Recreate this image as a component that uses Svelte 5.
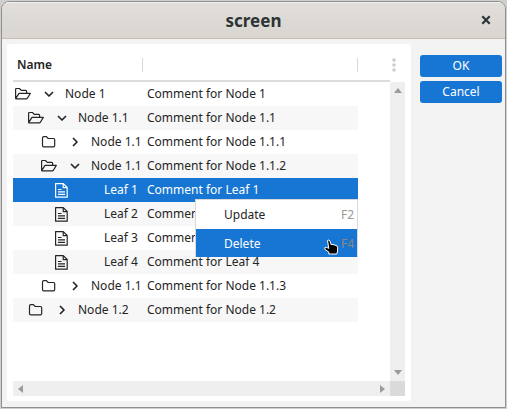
<script>
  let selected = $state(4);
  let active = $state("Delete");

  const rows = [
    { depth: 0, kind: "open", name: "Node 1", comment: "Comment for Node 1" },
    { depth: 1, kind: "open", name: "Node 1.1", comment: "Comment for Node 1.1" },
    { depth: 2, kind: "closed", name: "Node 1.1", comment: "Comment for Node 1.1.1" },
    { depth: 2, kind: "open", name: "Node 1.1", comment: "Comment for Node 1.1.2" },
    { depth: 3, kind: "leaf", name: "Leaf 1", comment: "Comment for Leaf 1" },
    { depth: 3, kind: "leaf", name: "Leaf 2", comment: "Comment for Leaf 2" },
    { depth: 3, kind: "leaf", name: "Leaf 3", comment: "Comment for Leaf 3" },
    { depth: 3, kind: "leaf", name: "Leaf 4", comment: "Comment for Leaf 4" },
    { depth: 2, kind: "closed", name: "Node 1.1", comment: "Comment for Node 1.1.3" },
    { depth: 1, kind: "closed", name: "Node 1.2", comment: "Comment for Node 1.2" }
  ];

  const menu = [
    { label: "Update", key: "F2" },
    { label: "Delete", key: "F4" }
  ];
</script>

<div class="dialog" role="dialog" aria-labelledby="title">
  <header>
    <h1 id="title">screen</h1>
    <button class="close" aria-label="Close">
      <svg width="10" height="10" viewBox="0 0 10 10"><path d="M1.3 1.3 8.7 8.7M8.7 1.3 1.3 8.7" /></svg>
    </button>
  </header>

  <div class="content">
    <div class="panel">
      <div class="tree">
        <table>
          <thead>
            <tr>
              <th class="name"><div class="head">Name</div></th>
              <th class="comment"><div class="head"></div></th>
              <th></th>
            </tr>
          </thead>
          <tbody>
            {#each rows as row, i}
              <tr class:selected={selected === i} onclick={() => (selected = i)}>
                <td>
                  <div class="node" style="padding-left: {2 + row.depth * 13}px">
                    <svg class="icon" width="16" height="16" viewBox="0 0 16 16">
                      {#if row.kind === "open"}
                        <path d="M.6 12.6V3.4Q.6 2.5 1.5 2.5H4.4L6.3 4.4H10.7Q11.6 4.4 11.6 5.3V7.3M.6 12.6 4 7.4H15.3L12.4 12.2Q12 12.8 11.3 12.8H1.2Q.6 12.8 .6 12.2" />
                      {:else if row.kind === "closed"}
                        <path d="M1.5 4Q1.5 2.6 2.9 2.6H5.4L7.2 4.5H12.4Q13.7 4.5 13.7 5.8V11.5Q13.7 12.8 12.4 12.8H2.8Q1.5 12.8 1.5 11.5Z" />
                      {:else}
                        <path d="M1.6 1.6H9.3L13.2 5.5V15.2H1.6ZM9.2 1.8V5.7H13M4 7.5H7.5M4 9.9H11M4 12.3H11" />
                      {/if}
                    </svg>
                    <svg class="arrow" width="10" height="10" viewBox="0 0 10 10">
                      {#if row.kind === "open"}
                        <path d="M1 3 5 7 9 3" />
                      {:else if row.kind === "closed"}
                        <path d="M3 1 7 5 3 9" />
                      {/if}
                    </svg>
                    <span>{row.name}</span>
                  </div>
                </td>
                <td>{row.comment}</td>
                <td></td>
              </tr>
            {/each}
          </tbody>
        </table>
      </div>

      <div class="side">
        <button class="more" aria-label="Columns">
          <svg width="4" height="14" viewBox="0 0 4 14">
            <circle cx="2" cy="2" r="1.7" /><circle cx="2" cy="7" r="1.7" /><circle cx="2" cy="12" r="1.7" />
          </svg>
        </button>
        <div class="scroll vertical">
          <svg width="8" height="5" viewBox="0 0 8 5"><path d="M0 5 4 0 8 5Z" /></svg>
          <svg width="8" height="5" viewBox="0 0 8 5"><path d="M0 0H8L4 5Z" /></svg>
        </div>
      </div>

      <div class="scroll horizontal">
        <svg width="5" height="8" viewBox="0 0 5 8"><path d="M5 0V8L0 4Z" /></svg>
        <svg width="5" height="8" viewBox="0 0 5 8"><path d="M0 0 5 4 0 8Z" /></svg>
      </div>
      <div class="corner"></div>

      <div class="menu" role="menu">
        {#each menu as item}
          <button role="menuitem" class:active={active === item.label} onmouseenter={() => (active = item.label)}>
            <span>{item.label}</span>
            <span class="key">{item.key}</span>
          </button>
        {/each}
        <svg class="pointer" width="15" height="16" viewBox="0 0 15 16">
          <path d="M3.5 1.5Q5 .3 6 2L7 5.5 9 5.4 11 6.2 13 6.8 13.6 8.2V12L12.8 15H4.8V13L1 10.5.8 8.6 2.6 8.3 4.8 9.4Z" />
        </svg>
      </div>
    </div>

    <div class="actions">
      <button>OK</button>
      <button>Cancel</button>
    </div>
  </div>
</div>

<style>
  :global(body) {
    background: #cdd0ce;
  }

  .dialog {
    box-sizing: border-box;
    display: flex;
    flex-direction: column;
    height: calc(100vh - 2px);
    margin: 1px 1px;
    border: 1px solid #8e8f8e;
    border-radius: 8px 8px 0 0;
    background: #f3f3f3;
    color: #252525;
    font-family: "Noto Sans", sans-serif;
    font-size: 12px;
    overflow: hidden;
  }

  button {
    font: inherit;
    border: 0;
    padding: 0;
    background: none;
    color: inherit;
  }

  svg {
    display: block;
  }

  header {
    box-sizing: border-box;
    flex: none;
    display: grid;
    grid-template-columns: 28px 1fr 28px;
    align-items: center;
    height: 37px;
    border-top: 1px solid #f4f2f0;
    border-bottom: 1px solid #c9bdb2;
    background: linear-gradient(#e1dedb, #d9d5d0);
  }

  h1 {
    grid-column: 2;
    margin: 0;
    text-align: center;
    font-size: 17px;
    line-height: 24px;
    color: #2e3436;
  }

  .close path {
    fill: none;
    stroke: #2e3436;
    stroke-width: 2.2;
  }

  .close {
    padding: 0 0 2px 4px;
    justify-self: start;
  }

  .content {
    flex: 1;
    display: flex;
    gap: 9px;
    padding: 5px 3px 6px 5px;
  }

  .panel {
    position: relative;
    flex: 1;
    display: grid;
    grid-template-columns: 1fr 15px;
    grid-template-rows: 1fr 15px;
    padding: 6px 6px 5px 6px;
    border-radius: 3px;
    background: #fff;
  }

  table {
    width: 100%;
    table-layout: fixed;
    border-collapse: collapse;
  }

  th {
    height: 30px;
    padding: 0;
    border-bottom: 2px solid #dcdcdc;
    text-align: left;
    font-weight: 600;
  }

  .name {
    width: 130px;
  }

  .comment {
    width: 215px;
  }

  .head {
    height: 14px;
    padding-left: 4px;
    border-right: 1px solid #d8d8d8;
    line-height: 14px;
  }

  td {
    height: 24px;
    padding: 0 0 0 4px;
    line-height: 24px;
    white-space: nowrap;
  }

  td:first-child {
    padding: 0;
  }

  tbody tr:nth-child(even) td:not(:last-child) {
    background: #f7f7f7;
  }

  tbody tr.selected td:not(:last-child) {
    background: #1776d3;
    color: #fff;
  }

  .node {
    display: flex;
    align-items: center;
    height: 24px;
  }

  .icon {
    flex: none;
    margin-right: 13px;
  }

  .arrow {
    flex: none;
    margin-right: 11px;
  }

  .icon path,
  .arrow path {
    fill: none;
    stroke: currentColor;
    stroke-width: 1.2;
    stroke-linejoin: round;
  }

  .arrow path {
    stroke-width: 1.7;
  }

  .side {
    display: flex;
    flex-direction: column;
  }

  .more {
    display: flex;
    align-items: center;
    flex: none;
    height: 30px;
    padding-left: 2px;
    margin-bottom: 2px;
    fill: #c9c9c9;
  }

  .scroll {
    display: flex;
    align-items: center;
    justify-content: space-between;
    background: #efefef;
    fill: #9b9b9b;
  }

  .vertical {
    flex: 1;
    flex-direction: column;
    padding: 6px 0;
  }

  .horizontal {
    padding: 0 5px;
  }

  .corner {
    background: #dadada;
  }

  .menu {
    position: absolute;
    top: 155px;
    left: 188px;
    box-sizing: border-box;
    width: 163px;
    border: 1px solid #d9d9d9;
    border-bottom: 0;
    background: #fff;
  }

  .menu button {
    display: flex;
    align-items: center;
    justify-content: space-between;
    width: 100%;
    height: 28px;
    padding: 0 3px 0 28px;
  }

  .menu button + button {
    margin-top: 1px;
  }

  .menu .key {
    color: #999;
  }

  .menu .active {
    background: #1776d3;
    color: #fff;
  }

  .menu .active .key {
    color: #8d8582;
  }

  .pointer {
    position: absolute;
    right: 18px;
    bottom: 2px;
  }

  .pointer path {
    fill: #050505;
    stroke: #fff;
    stroke-width: 1;
  }

  .actions {
    display: flex;
    flex-direction: column;
    gap: 4px;
    width: 82px;
    padding-top: 11px;
  }

  .actions button {
    height: 22px;
    padding-bottom: 1px;
    border-radius: 3px;
    background: #1776d3;
    color: #fff;
  }
</style>
